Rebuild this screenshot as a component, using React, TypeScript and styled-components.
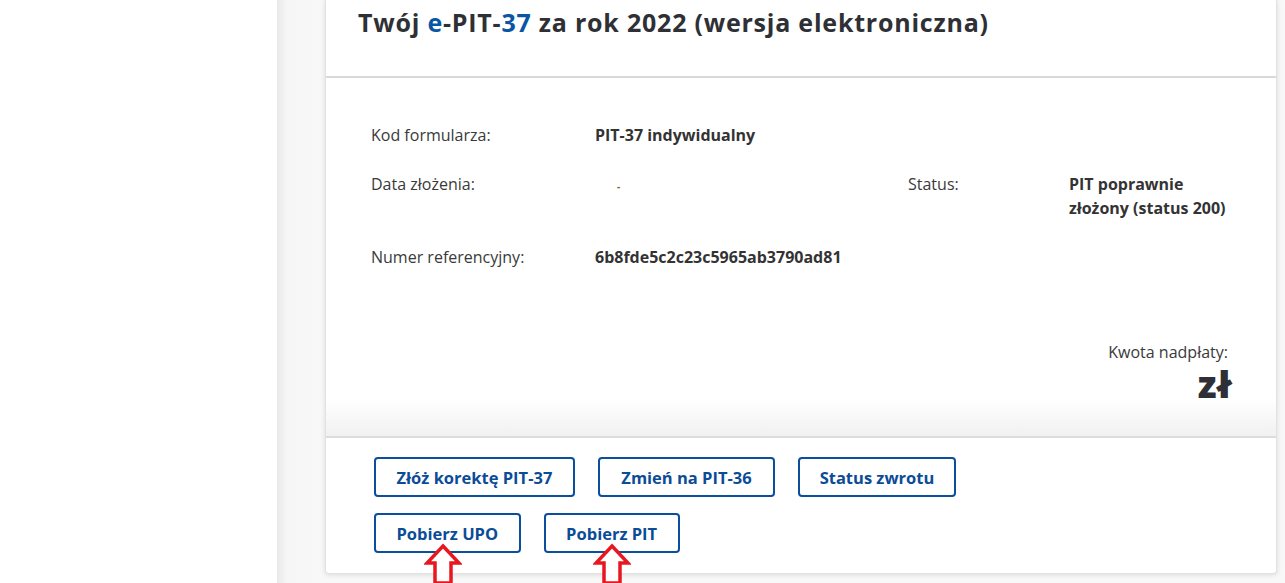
import React from 'react';
import styled, { createGlobalStyle } from 'styled-components';

const GlobalStyle = createGlobalStyle`
  html, body {
    margin: 0;
    padding: 0;
    height: 583px;
    overflow: hidden;
    background: #fff;
    font-family: 'Open Sans', 'Liberation Sans', sans-serif;
    color: #333;
  }
`;

const Page = styled.div`
  display: flex;
  height: 583px;
`;

const LeftPane = styled.div`
  width: 277px;
  flex: none;
  background: #fff;
`;

const Main = styled.div`
  flex: 1;
  background: linear-gradient(90deg, #e9e9e9 0px, #f6f6f6 10px, #f8f8f8 40px);
  padding: 0 8px 0 48px;
`;

const Card = styled.div`
  width: 952px;
  background: #fff;
  border: 1px solid #e2e2e2;
  border-top: none;
  border-radius: 0 0 4px 4px;
  box-shadow: 0 1px 5px rgba(0, 0, 0, 0.12);
  box-sizing: border-box;
`;

const Header = styled.div`
  height: 78px;
  border-bottom: 2px solid #d9d9d9;
  padding: 6px 0 0 32px;
  box-sizing: border-box;
`;

const Title = styled.h1`
  margin: 0;
  font-size: 25px;
  line-height: 32px;
  font-weight: 700;
  color: #2e3035;
  letter-spacing: 0.78px;
`;

const Accent = styled.span`
  color: #0b55a5;
`;

const Body = styled.div`
  height: 358px;
  padding: 45px 0 0 45px;
  box-sizing: border-box;
  background: linear-gradient(180deg, #fff 0, #fff 320px, #f1f1f1 358px);
  display: flex;
  flex-direction: column;
`;

const InfoGrid = styled.div`
  display: grid;
  grid-template-columns: 224px 313px 161px 1fr;
  row-gap: 25px;
  font-size: 16px;
  line-height: 24px;
`;

const Label = styled.div`
  color: #3a3a3a;
`;

const Value = styled.div`
  font-weight: 700;
  color: #333;
`;

const Dot = styled.span`
  display: inline-block;
  margin-left: 22px;
  font-size: 10px;
  color: #8a5a2a;
`;

const Amount = styled.div`
  margin-top: auto;
  margin-bottom: 32px;
  padding-right: 48px;
  text-align: right;
`;

const AmountLabel = styled.div`
  font-size: 16px;
  line-height: 24px;
  color: #3a3a3a;
`;

const AmountValue = styled.div`
  font-size: 37px;
  line-height: 40px;
  font-weight: 800;
  color: #2e3035;
  margin-right: -4px;
`;

const Footer = styled.div`
  position: relative;
  border-top: 2px solid #dcdcdc;
  padding: 19px 0 20px 48px;
  display: flex;
  flex-direction: column;
  gap: 16px;
`;

const ButtonRow = styled.div`
  display: flex;
  gap: 23px;
`;

const Button = styled.button<{ $pad?: number }>`
  height: 40px;
  padding: 0 ${(p) => p.$pad ?? 20.5}px;
  border: 2px solid #0b4f9c;
  border-radius: 4px;
  background: #fff;
  color: #0b4c97;
  font-family: 'Open Sans', 'Liberation Sans', sans-serif;
  font-size: 16.5px;
  font-weight: 700;
  cursor: pointer;
`;

const Arrow = styled.svg<{ $left: number }>`
  position: absolute;
  left: ${(p) => p.$left}px;
  top: 105px;
  width: 38px;
  height: 40px;
`;

function UpArrow({ left }: { left: number }) {
  return (
    <Arrow $left={left} viewBox="0 0 38 40">
      <polygon
        points="19,3 35,20 27,20 27,40 11,40 11,20 3,20"
        fill="#fff"
        stroke="#e8171f"
        strokeWidth="3.5"
        strokeLinejoin="miter"
      />
    </Arrow>
  );
}

export default function App() {
  return (
    <>
      <GlobalStyle />
      <Page>
        <LeftPane />
        <Main>
          <Card>
            <Header>
              <Title>
                Twój <Accent>e</Accent>-PIT-<Accent>37</Accent> za rok 2022 (wersja elektroniczna)
              </Title>
            </Header>
            <Body>
              <InfoGrid>
                <Label>Kod formularza:</Label>
                <Value>PIT-37 indywidualny</Value>
                <div />
                <div />
                <Label>Data złożenia:</Label>
                <Value>
                  <Dot>-</Dot>
                </Value>
                <Label>Status:</Label>
                <Value>
                  PIT poprawnie
                  <br />
                  złożony (status 200)
                </Value>
                <Label>Numer referencyjny:</Label>
                <Value>6b8fde5c2c23c5965ab3790ad81</Value>
                <div />
                <div />
              </InfoGrid>
              <Amount>
                <AmountLabel>Kwota nadpłaty:</AmountLabel>
                <AmountValue>zł</AmountValue>
              </Amount>
            </Body>
            <Footer>
              <ButtonRow>
                <Button>Złóż korektę PIT-37</Button>
                <Button $pad={21.5}>Zmień na PIT-36</Button>
                <Button $pad={19.5}>Status zwrotu</Button>
              </ButtonRow>
              <ButtonRow>
                <Button>Pobierz UPO</Button>
                <Button>Pobierz PIT</Button>
              </ButtonRow>
              <UpArrow left={98} />
              <UpArrow left={267} />
            </Footer>
          </Card>
        </Main>
      </Page>
    </>
  );
}
